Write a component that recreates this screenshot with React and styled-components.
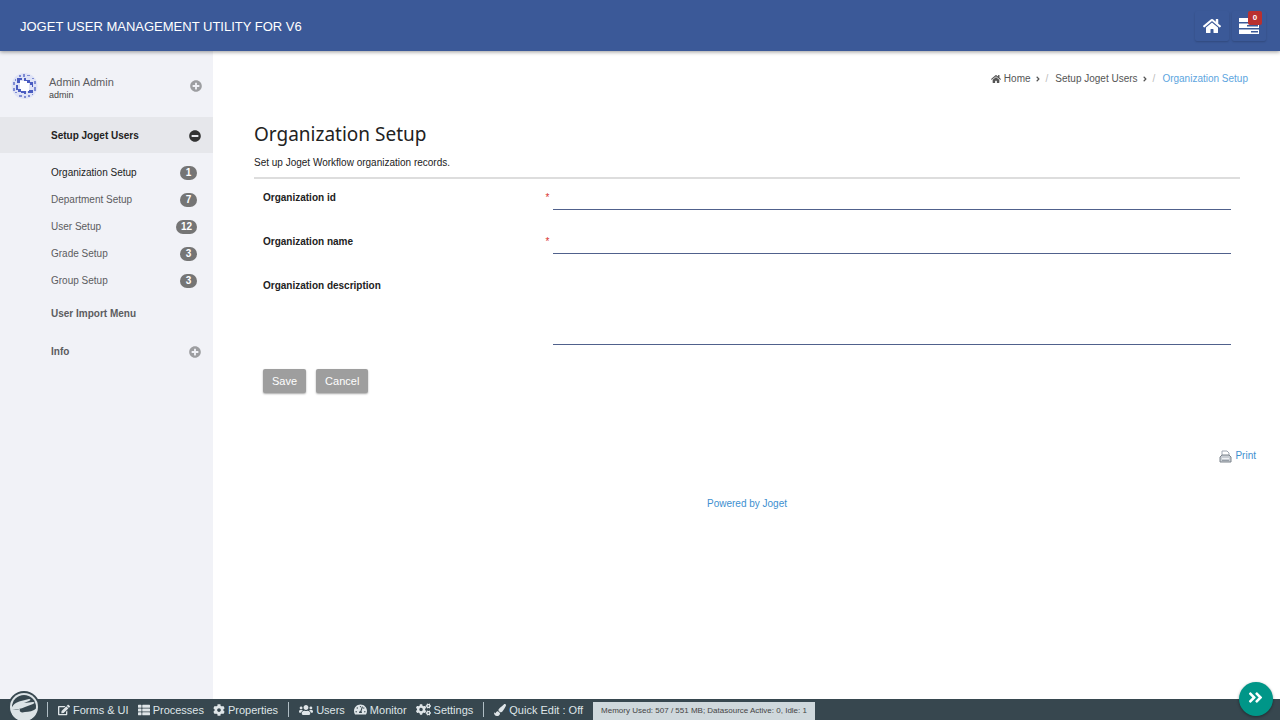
import React from 'react';
import styled, { createGlobalStyle } from 'styled-components';
import {
  FaHome,
  FaPlusCircle,
  FaMinusCircle,
  FaEdit,
  FaThList,
  FaCog,
  FaUsers,
  FaTachometerAlt,
  FaCogs,
  FaPaintBrush,
  FaAngleRight,
  FaAngleDoubleRight
} from 'react-icons/fa';

const GlobalStyle = createGlobalStyle`
  * {
    box-sizing: border-box;
  }

  body {
    margin: 0;
    background: #fff;
    color: #222;
    font-family: 'Liberation Sans', Arial, sans-serif;
    font-size: 10px;
    line-height: 14px;
  }

  a {
    color: inherit;
    text-decoration: none;
  }

  ul, ol {
    list-style: none;
    margin: 0;
    padding: 0;
  }
`

const Page = styled.div`
  min-height: 100vh;
  display: flex;
  flex-direction: column;
`

const Header = styled.header`
  display: flex;
  align-items: center;
  justify-content: space-between;
  height: 51px;
  padding: 0 14px 0 20px;
  background: #3b5998;
  color: #fff;
  box-shadow: 0 1px 4px rgba(0, 0, 0, 0.4);
  z-index: 1;
`

const Brand = styled.a`
  font-size: 13px;
  line-height: 20px;
  padding-top: 2px;
`

const HeaderActions = styled.nav`
  display: flex;
  gap: 3px;
`

const HeaderButton = styled.a`
  position: relative;
  display: flex;
  align-items: center;
  justify-content: center;
  width: 34px;
  height: 30px;
  border-radius: 2px;
  font-size: 18px;
  box-shadow: 0 1px 2px rgba(0, 0, 0, 0.18);
`

const AlertBadge = styled.span`
  position: absolute;
  top: 0;
  right: 4px;
  width: 14px;
  height: 14px;
  border-radius: 2px;
  background: #b9302f;
  font-size: 8px;
  font-weight: bold;
  text-align: center;
`

const Body = styled.div`
  flex: 1;
  display: flex;
`

const Sidebar = styled.aside`
  flex: 0 0 213px;
  background: #f1f2f7;
  color: #5c5c5f;
`

const Profile = styled.a`
  display: flex;
  align-items: center;
  gap: 11px;
  height: 66px;
  padding: 3px 11px 0 11px;
`

const ProfileText = styled.span`
  flex: 1;
  display: flex;
  flex-direction: column;
  padding-top: 5px;
`

const UserName = styled.span`
  font-size: 11px;
`

const UserLogin = styled.span`
  font-size: 9px;
  line-height: 13px;
  color: #444;
`

const Toggle = styled.span`
  display: flex;
  font-size: 12px;
  color: ${props => (props.$open ? '#333' : '#9d9ea1')};
`

const Category = styled.a`
  display: flex;
  align-items: center;
  justify-content: space-between;
  height: ${props => (props.$active ? '36px' : '38px')};
  padding: 1px 12px 0 51px;
  background: ${props => (props.$active ? '#e6e7eb' : 'transparent')};
  color: ${props => (props.$active ? '#222' : 'inherit')};
  font-weight: bold;
`

const SubMenu = styled.ul`
  padding-top: 6px;
`

const SubItem = styled.a`
  display: flex;
  align-items: center;
  justify-content: space-between;
  height: 27px;
  padding: 0 16px 0 51px;
  color: ${props => (props.$active ? '#222' : 'inherit')};
`

const Count = styled.span`
  min-width: 17px;
  padding: 0 5px;
  border-radius: 7px;
  background: #757575;
  color: #fff;
  font-weight: bold;
  text-align: center;
`

const Main = styled.main`
  flex: 1;
  padding: 21px 24px 20px 41px;
`

const Breadcrumb = styled.ol`
  display: flex;
  justify-content: flex-end;
  align-items: center;
  gap: 4px;
  padding-right: 8px;
  color: #555;
`

const Crumb = styled.li`
  display: flex;
  align-items: center;
  gap: 3px;
  color: ${props => (props.$current ? '#5da5e0' : 'inherit')};
`

const Slash = styled.span`
  color: #bbb;
  padding-right: 4px;
`

const Panel = styled.section`
  padding: 33px 16px 0 0;
`

const Title = styled.h1`
  margin: 0;
  font-family: 'Noto Sans', sans-serif;
  font-size: 19px;
  font-weight: 400;
  line-height: 30px;
`

const Intro = styled.p`
  margin: 0;
  padding: 7px 0;
  border-bottom: 2px solid #ddd;
`

const Form = styled.form`
  padding: 6px 9px 0;
`

const Field = styled.div`
  display: grid;
  grid-template-columns: 30% 1fr;
  align-items: start;
  margin-bottom: 19px;
`

const Label = styled.label`
  display: flex;
  justify-content: space-between;
  padding: 6px 4px 0 0;
  font-weight: bold;
`

const Required = styled.span`
  color: #d9332e;
  font-weight: normal;
`

const Input = styled.input`
  width: 100%;
  height: 25px;
  padding: 4px 0;
  border: 0;
  border-bottom: 1px solid #50618c;
  outline: 0;
  font: inherit;
`

const TextArea = styled.textarea`
  display: block;
  width: 100%;
  height: 72px;
  padding: 4px 0;
  border: 0;
  border-bottom: 1px solid #50618c;
  outline: 0;
  resize: none;
  font: inherit;
`

const Buttons = styled.div`
  display: flex;
  gap: 10px;
  padding-top: 5px;
`

const Button = styled.button`
  height: 24px;
  padding: 0 9px 1px;
  border: 0;
  border-radius: 2px;
  background: #9e9e9e;
  color: #fff;
  font: inherit;
  font-size: 11px;
  box-shadow: 0 1px 2px rgba(0, 0, 0, 0.35);
`

const PrintRow = styled.div`
  display: flex;
  justify-content: flex-end;
  padding-top: 56px;
`

const PrintLink = styled.a`
  display: flex;
  align-items: center;
  gap: 3px;
  color: #3d8fd0;
`

const Powered = styled.footer`
  padding: 34px 16px 0 0;
  text-align: center;
  color: #3d8fd0;
`

const AdminBar = styled.footer`
  position: relative;
  display: flex;
  align-items: center;
  height: 21px;
  padding-left: 47px;
  background: #37474f;
  color: #dfe5e8;
`

const BarGroup = styled.nav`
  display: flex;
  gap: 9px;
  height: 15px;
  padding: 0 10px;
  border-left: 1px solid #b0bec5;
`

const BarLink = styled.a`
  display: flex;
  align-items: center;
  gap: 3px;
  font-size: 11px;
`

const Memory = styled.span`
  align-self: flex-end;
  height: 18px;
  padding: 0 8px;
  background: #cfd8dc;
  color: #444;
  font-size: 8px;
  line-height: 18px;
`

const LogoLink = styled.a`
  position: absolute;
  left: 8px;
  bottom: -3px;
  height: 32px;
  overflow: hidden;
`

const Fab = styled.button`
  position: absolute;
  right: 7px;
  bottom: 4px;
  display: flex;
  align-items: center;
  justify-content: center;
  width: 34px;
  height: 34px;
  padding: 0 2px 3px 0;
  border: 0;
  border-radius: 50%;
  background: #009688;
  color: #fff;
  font-size: 17px;
  box-shadow: 0 1px 3px rgba(0, 0, 0, 0.4);
`

const TasksIcon = () => (
  <svg width="20" height="18" viewBox="0 0 20 18" fill="currentColor">
    <path fillRule="evenodd" d="M0 1h20v4H0zM12 2.300h7v1.400h-7z" />
    <path fillRule="evenodd" d="M0 6.500h20v4.500H0zM8 8h11v1.500H8z" />
    <path fillRule="evenodd" d="M0 12.500h20V17H0zM12 14h7v1.500h-7z" />
  </svg>
)

const Avatar = () => (
  <svg width="27" height="28" viewBox="0 0 27 28">
    <circle cx="13.500" cy="14" r="13" fill="#dfe3f6" />
    <path d="M9 9h9v10H9z" fill="#fff" />
    <g fill="#4a5cc0">
      <path d="M6 6h5v2H9v3H6zM13 6h2v2h4v3h-3v-2h-3zM19 10h3v5h-1v-2h-2zM18 18h4v3h-5v-2h1zM10 19h5v3h-2v-1h-3zM5 13h2v4h3v3H7v-2H5z" />
      <path d="M8 3h2v2H8zM12 2h2v3h-2zM16 3h3v1h-3zM2 10h2v3H2zM2 16h2v3H2zM23 9h2v3h-2zM23 15h2v4h-2zM8 23h3v2H8zM13 24h2v2h-2zM17 23h2v2h-2zM4 7h1v2H4zM21 6h2v1h-2zM4 20h2v1H4zM21 22h1v1h-1z" opacity=".65" />
    </g>
  </svg>
)

const PrinterIcon = () => (
  <svg width="13" height="13" viewBox="0 0 13 13">
    <path d="M3 6V1h5l2 2v3" fill="#fff" stroke="#a0a8b3" />
    <path d="M1 7l2-2h7l2 2v5H1z" fill="#c9ced4" stroke="#7c848c" />
    <path d="M3 8.500h7" stroke="#eef1f4" />
    <path d="M3 10.500h7" stroke="#969ea7" />
  </svg>
)

const LogoIcon = () => (
  <svg width="32" height="32" viewBox="0 0 32 32">
    <circle cx="16" cy="16" r="16" fill="#37474f" />
    <circle cx="16" cy="16" r="14" fill="#dce3e6" />
    <circle cx="16" cy="16" r="12" fill="#37474f" />
    <path d="M3 19c1-5 5-8 10-9l8-2c2 0 2 1 0 2l-5 2 9-1c2 0 2 1 0 2l-8 3c-4 2-8 2-14 3z" fill="#dce3e6" />
    <path d="M3 18c3 1 6 1 9 0-1 3 1 4 5 3 4 0 8-1 12-4 0 7-6 13-13 13S3 25 3 18z" fill="#dce3e6" />
  </svg>
)

const setupItems = [
  { label: 'Organization Setup', count: 1, active: true },
  { label: 'Department Setup', count: 7 },
  { label: 'User Setup', count: 12 },
  { label: 'Grade Setup', count: 3 },
  { label: 'Group Setup', count: 3 }
];

const barGroups = [
  [
    { icon: <FaEdit size={12} />, label: 'Forms & UI' },
    { icon: <FaThList size={12} />, label: 'Processes' },
    { icon: <FaCog size={12} />, label: 'Properties' }
  ],
  [
    { icon: <FaUsers size={14} />, label: 'Users' },
    { icon: <FaTachometerAlt size={13} />, label: 'Monitor' },
    { icon: <FaCogs size={15} />, label: 'Settings' }
  ],
  [{ icon: <FaPaintBrush size={12} />, label: 'Quick Edit : Off' }]
];

const App = () => (
  <>
    <GlobalStyle />
    <Page>
      <Header>
        <Brand href="#">JOGET USER MANAGEMENT UTILITY FOR V6</Brand>
        <HeaderActions>
          <HeaderButton href="#" aria-label="Home"><FaHome /></HeaderButton>
          <HeaderButton href="#" aria-label="Inbox">
            <TasksIcon />
            <AlertBadge>0</AlertBadge>
          </HeaderButton>
        </HeaderActions>
      </Header>
      <Body>
        <Sidebar>
          <Profile href="#">
            <Avatar />
            <ProfileText>
              <UserName>Admin Admin</UserName>
              <UserLogin>admin</UserLogin>
            </ProfileText>
            <Toggle><FaPlusCircle /></Toggle>
          </Profile>
          <Category href="#" $active>
            Setup Joget Users
            <Toggle $open><FaMinusCircle /></Toggle>
          </Category>
          <SubMenu>
            {setupItems.map(item => (
              <li key={item.label}>
                <SubItem href="#" $active={item.active}>
                  {item.label}
                  <Count>{item.count}</Count>
                </SubItem>
              </li>
            ))}
          </SubMenu>
          <Category href="#">User Import Menu</Category>
          <Category href="#">
            Info
            <Toggle><FaPlusCircle /></Toggle>
          </Category>
        </Sidebar>
        <Main>
          <Breadcrumb>
            <Crumb><FaHome /><a href="#">Home</a><FaAngleRight size={8} /></Crumb>
            <Crumb><Slash>/</Slash><a href="#">Setup Joget Users</a><FaAngleRight size={8} /></Crumb>
            <Crumb $current><Slash>/</Slash><a href="#">Organization Setup</a></Crumb>
          </Breadcrumb>
          <Panel>
            <Title>Organization Setup</Title>
            <Intro>Set up Joget Workflow organization records.</Intro>
            <Form>
              <Field>
                <Label htmlFor="orgId">Organization id <Required>*</Required></Label>
                <Input id="orgId" type="text" />
              </Field>
              <Field>
                <Label htmlFor="orgName">Organization name <Required>*</Required></Label>
                <Input id="orgName" type="text" />
              </Field>
              <Field>
                <Label htmlFor="orgDescription">Organization description</Label>
                <TextArea id="orgDescription" />
              </Field>
              <Buttons>
                <Button type="button">Save</Button>
                <Button type="button">Cancel</Button>
              </Buttons>
            </Form>
          </Panel>
          <PrintRow>
            <PrintLink href="#"><PrinterIcon />Print</PrintLink>
          </PrintRow>
          <Powered><a href="#">Powered by Joget</a></Powered>
        </Main>
      </Body>
      <AdminBar>
        <LogoLink href="#" aria-label="Joget"><LogoIcon /></LogoLink>
        {barGroups.map((group, index) => (
          <BarGroup key={index}>
            {group.map(link => (
              <BarLink href="#" key={link.label}>{link.icon}{link.label}</BarLink>
            ))}
          </BarGroup>
        ))}
        <Memory>Memory Used: 507 / 551 MB; Datasource Active: 0, Idle: 1</Memory>
        <Fab type="button" aria-label="Toggle admin bar"><FaAngleDoubleRight /></Fab>
      </AdminBar>
    </Page>
  </>
);

export default App;
